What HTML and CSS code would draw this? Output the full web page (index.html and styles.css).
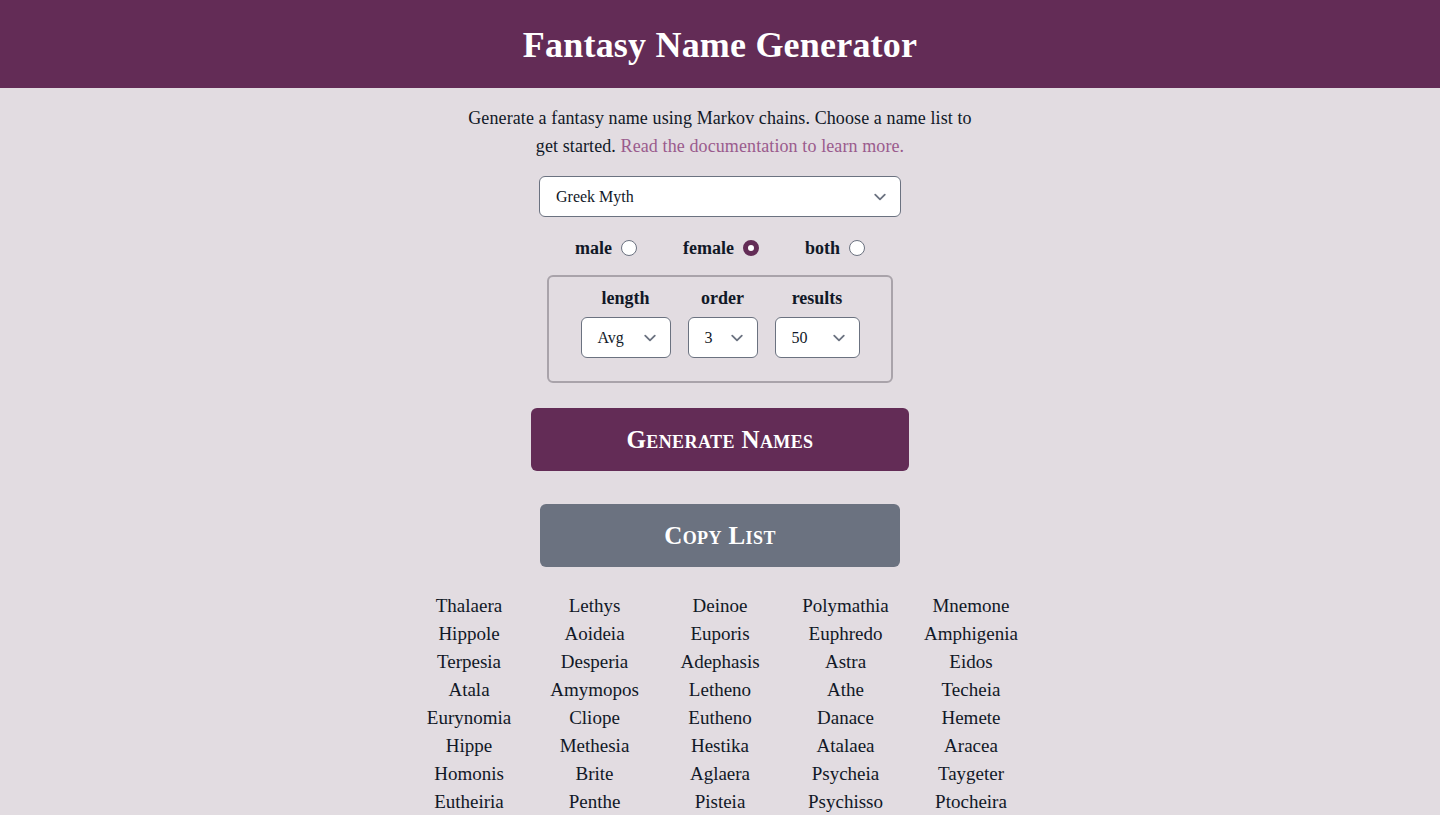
FILE: index.html
```html
<!DOCTYPE html>
<html lang="en">
<head>
<meta charset="utf-8">
<title>Fantasy Name Generator</title>
<link rel="stylesheet" href="styles.css">
</head>
<body>
<header class="site-header">
  <h1 class="site-title">Fantasy Name Generator</h1>
</header>
<main class="content">
  <p class="intro">Generate a fantasy name using Markov chains. Choose a name list to get started. <a class="intro-link" href="#">Read the documentation to learn more.</a></p>

  <div class="select-box select-list">
    <span class="select-value">Greek Myth</span>
    <svg class="chevron" viewBox="0 0 20 20"><path d="M6 8l4 4 4-4"/></svg>
  </div>

  <div class="gender-row">
    <label class="gender-option"><span>male</span><span class="radio"></span></label>
    <label class="gender-option"><span>female</span><span class="radio radio-checked"></span></label>
    <label class="gender-option"><span>both</span><span class="radio"></span></label>
  </div>

  <div class="options-box">
    <div class="option-col">
      <span class="option-label">length</span>
      <div class="select-box select-length">
        <span class="select-value">Avg</span>
        <svg class="chevron" viewBox="0 0 20 20"><path d="M6 8l4 4 4-4"/></svg>
      </div>
    </div>
    <div class="option-col">
      <span class="option-label">order</span>
      <div class="select-box select-order">
        <span class="select-value">3</span>
        <svg class="chevron" viewBox="0 0 20 20"><path d="M6 8l4 4 4-4"/></svg>
      </div>
    </div>
    <div class="option-col">
      <span class="option-label">results</span>
      <div class="select-box select-results">
        <span class="select-value">50</span>
        <svg class="chevron" viewBox="0 0 20 20"><path d="M6 8l4 4 4-4"/></svg>
      </div>
    </div>
  </div>

  <button class="btn btn-generate">Generate Names</button>
  <button class="btn btn-copy">Copy List</button>

  <ul class="names">
    <li>Thalaera</li><li>Lethys</li><li>Deinoe</li><li>Polymathia</li><li>Mnemone</li>
    <li>Hippole</li><li>Aoideia</li><li>Euporis</li><li>Euphredo</li><li>Amphigenia</li>
    <li>Terpesia</li><li>Desperia</li><li>Adephasis</li><li>Astra</li><li>Eidos</li>
    <li>Atala</li><li>Amymopos</li><li>Letheno</li><li>Athe</li><li>Techeia</li>
    <li>Eurynomia</li><li>Cliope</li><li>Eutheno</li><li>Danace</li><li>Hemete</li>
    <li>Hippe</li><li>Methesia</li><li>Hestika</li><li>Atalaea</li><li>Aracea</li>
    <li>Homonis</li><li>Brite</li><li>Aglaera</li><li>Psycheia</li><li>Taygeter</li>
    <li>Eutheiria</li><li>Penthe</li><li>Pisteia</li><li>Psychisso</li><li>Ptocheira</li>
  </ul>
</main>
</body>
</html>
```

FILE: styles.css
```css
* { box-sizing: border-box; }

html, body {
  margin: 0;
  padding: 0;
}

body {
  background: #e2dce1;
  color: #111827;
  font-family: "Liberation Serif", "Times New Roman", serif;
}

.site-header {
  background: #632c56;
  height: 88px;
  display: flex;
  align-items: center;
  justify-content: center;
}

.site-title {
  margin: 0;
  color: #ffffff;
  font-size: 36px;
  font-weight: 700;
  line-height: 1;
  letter-spacing: 0.2px;
  padding-top: 2px;
}

.content {
  display: flex;
  flex-direction: column;
  align-items: center;
  padding-top: 16px;
}

.intro {
  margin: 0;
  max-width: 512px;
  text-align: center;
  font-size: 18px;
  line-height: 28px;
  letter-spacing: 0.1px;
}

.intro-link {
  color: #9a5b8d;
  text-decoration: none;
}

.select-box {
  position: relative;
  display: flex;
  align-items: center;
  background: #ffffff;
  border: 1px solid #6b7280;
  border-radius: 6px;
  font-size: 16px;
  padding-left: 16px;
  padding-top: 1px;
}

.select-list {
  margin-top: 16px;
  width: 362px;
  height: 41px;
}

.chevron {
  position: absolute;
  right: 8px;
  top: 50%;
  width: 24px;
  height: 24px;
  margin-top: -12px;
  fill: none;
  stroke: #6b7280;
  stroke-width: 1.5;
  stroke-linecap: round;
  stroke-linejoin: round;
}

.gender-row {
  margin-top: 17px;
  display: flex;
  gap: 46px;
  height: 28px;
  align-items: center;
}

.gender-option {
  display: flex;
  align-items: center;
  gap: 9px;
  font-size: 18px;
  font-weight: 700;
  line-height: 28px;
}

.radio {
  width: 16px;
  height: 16px;
  border-radius: 50%;
  border: 1px solid #6b7280;
  background: #ffffff;
}

.radio-checked {
  border: 5px solid #632c56;
  background: #ffffff;
}

.options-box {
  margin-top: 13px;
  width: 346px;
  height: 108px;
  border: 2px solid #a9a3aa;
  border-radius: 6px;
  display: flex;
  justify-content: center;
  gap: 17px;
  padding-top: 7px;
}

.option-col {
  display: flex;
  flex-direction: column;
  align-items: center;
  gap: 5px;
}

.option-label {
  font-size: 18px;
  font-weight: 700;
  line-height: 28px;
}

.select-length { width: 90px; height: 41px; }
.select-order { width: 70px; height: 41px; }
.select-results { width: 85px; height: 41px; }

.btn {
  border: none;
  border-radius: 6px;
  color: #ffffff;
  font-family: inherit;
  font-size: 25px;
  font-weight: 700;
  font-variant: small-caps;
  letter-spacing: 0.4px;
  height: 63px;
  padding: 0;
  cursor: pointer;
}

.btn-generate {
  margin-top: 25px;
  width: 378px;
  background: #632c56;
}

.btn-copy {
  margin-top: 33px;
  width: 360px;
  background: #6b7280;
}

.names {
  list-style: none;
  margin: 25px 0 0;
  padding: 0;
  display: grid;
  grid-template-columns: repeat(5, 125.5px);
  font-size: 19px;
  line-height: 28px;
  text-align: center;
}
```
